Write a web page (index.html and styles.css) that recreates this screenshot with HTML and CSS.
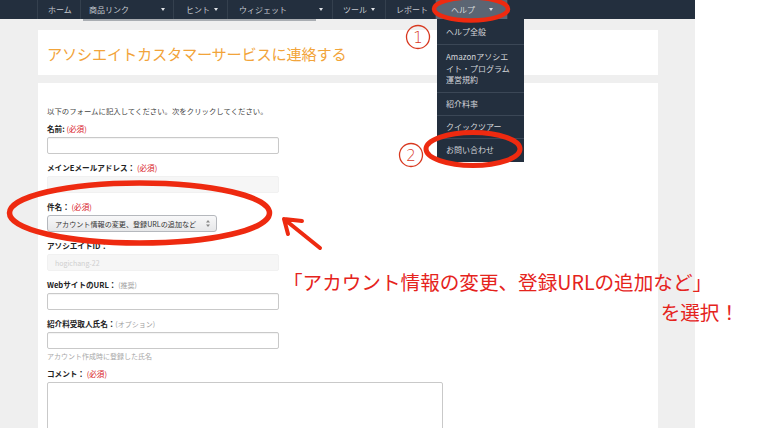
FILE: index.html
```html
<!DOCTYPE html>
<html lang="ja">
<head>
<meta charset="utf-8">
<title>アソシエイトカスタマーサービスに連絡する</title>
<link rel="stylesheet" href="styles.css">
</head>
<body>
<div class="screen">
  <div class="page">
    <nav class="topnav">
      <div class="nav-lead"></div>
      <div class="nav-item i-home"><span>ホーム</span></div>
      <div class="nav-item i-links"><span>商品リンク</span><i class="caret"></i></div>
      <div class="nav-item i-hint"><span>ヒント</span><i class="caret"></i></div>
      <div class="nav-item i-widget"><span>ウィジェット</span><i class="caret"></i></div>
      <div class="nav-item i-tools"><span>ツール</span><i class="caret"></i></div>
      <div class="nav-item i-report"><span>レポート</span></div>
      <div class="nav-item i-help"><span>ヘルプ</span><i class="caret"></i></div>
      <div class="nav-rest"></div>
    </nav>
    <main class="main">
      <div class="scrollbar"></div>
      <section class="card head-card">
        <h1>アソシエイトカスタマーサービスに連絡する</h1>
      </section>
      <section class="card form-card">
        <p class="intro">以下のフォームに記入してください。次をクリックしてください。</p>
        <div class="field">
          <label>名前: <em>(必須)</em></label>
          <input class="input" type="text">
        </div>
        <div class="field">
          <label>メインEメールアドレス： <em>(必須)</em></label>
          <input class="input" type="text" disabled>
        </div>
        <div class="field">
          <label>件名： <em>(必須)</em></label>
          <div class="select">
            <span>アカウント情報の変更、登録URLの追加など</span>
            <svg class="updown" width="4" height="7" viewBox="0 0 4 7"><path d="M2 0 L4 2.5 H0 Z M2 7 L4 4.5 H0 Z" fill="#888"/></svg>
          </div>
        </div>
        <div class="field">
          <label>アソシエイトID：</label>
          <input class="input" type="text" value="hogichang-22" disabled>
        </div>
        <div class="field">
          <label>WebサイトのURL： <small>(推奨)</small></label>
          <input class="input" type="text">
        </div>
        <div class="field has-help">
          <label>紹介料受取人氏名：<small>(オプション)</small></label>
          <input class="input" type="text">
          <p class="help">アカウント作成時に登録した氏名</p>
        </div>
        <div class="field">
          <label>コメント： <em>(必須)</em></label>
          <textarea class="textarea"></textarea>
        </div>
      </section>
    </main>
  </div>

  <ul class="dropdown">
    <li class="d-first">ヘルプ全般</li>
    <li class="d-multi">Amazonアソシエ<br>イト・プログラム<br>運営規約</li>
    <li>紹介料率</li>
    <li>クイックツアー</li>
    <li class="d-last">お問い合わせ</li>
  </ul>

  <svg class="marks" width="760" height="428" viewBox="0 0 760 428">
    <g fill="none" stroke="#ee2a10" stroke-linecap="round" stroke-linejoin="round">
      <ellipse cx="471" cy="9" rx="37" ry="11.5" stroke-width="4.5"/>
      <ellipse cx="473" cy="149" rx="47" ry="16.5" stroke-width="5"/>
      <ellipse cx="139.5" cy="213" rx="130" ry="30" stroke-width="5.5"/>
      <path d="M320 248 L284 219 M284 219 L302 221 M284 219 L288 234" stroke-width="4"/>
    </g>
    <g fill="none" stroke="#d8381f" stroke-width="1.3">
      <circle cx="418" cy="37" r="11.5"/>
      <circle cx="411" cy="155" r="11.5"/>
    </g>
    <text class="num" x="418" y="43" text-anchor="middle">1</text>
    <text class="num" x="411" y="161" text-anchor="middle">2</text>
  </svg>

  <p class="note">
    <span class="note-l1">「アカウント情報の変更、登録URLの追加など」</span>
    <span class="note-l2">を選択！</span>
  </p>
</div>
</body>
</html>
```

FILE: styles.css
```css
* { box-sizing: border-box; }
html, body { margin: 0; padding: 0; }
body {
  font-family: "Noto Sans CJK JP", "Noto Sans", sans-serif;
  background: #fff;
}
.screen {
  position: relative;
  width: 760px;
  height: 428px;
  overflow: hidden;
  display: flex;
  background: #fff;
}
.page {
  width: 695px;
  background: #efefef;
  display: flex;
  flex-direction: column;
}

/* top navigation */
.topnav {
  flex: none;
  height: 19px;
  background: #232f3e;
  display: flex;
}
.nav-lead { width: 37px; }
.nav-rest { flex: 1; border-left: 1px solid #34404e; }
.nav-item {
  display: flex;
  align-items: center;
  justify-content: space-between;
  border-left: 1px solid #34404e;
  color: #c5c9cf;
  font-size: 8px;
  line-height: 19px;
  padding: 0 9px 0 10px;
  white-space: nowrap;
}
.caret {
  width: 0;
  height: 0;
  border-left: 2.5px solid transparent;
  border-right: 2.5px solid transparent;
  border-top: 3px solid #dfe2e6;
}
.i-home { width: 43px; }
.i-links { width: 93px; padding-left: 8px; padding-right: 8px; }
.i-hint { width: 54px; padding-left: 12px; }
.i-widget { width: 105px; padding-left: 11px; }
.i-tools { width: 53px; padding-right: 10px; }
.i-report { width: 50px; }
.i-help {
  width: 72px;
  padding-left: 15px;
  padding-right: 14px;
  background: #5b6573;
  color: #d6d9dd;
}

/* main */
.main {
  flex: 1;
  display: flex;
  flex-direction: column;
  padding: 0 37px 0 38px;
}
.scrollbar {
  margin-left: 45px;
  width: 233px;
  height: 2px;
  background: #a9adb2;
}
.card { background: #fff; }
.head-card {
  margin-top: 9px;
  height: 45px;
  display: flex;
  align-items: center;
  padding-left: 9px;
}
.head-card h1 {
  margin: 0;
  font-size: 15.2px;
  font-weight: 400;
  color: #f2a43a;
  letter-spacing: -0.2px;
}
.form-card {
  margin-top: 8px;
  flex: 1;
  padding: 23px 9px 0;
}
.intro {
  margin: 0 0 8px;
  font-size: 7.4px;
  line-height: 10px;
  color: #444;
}
.field { margin-bottom: 9px; }
.field.has-help { margin-bottom: 8px; }
.field label {
  display: block;
  font-size: 7.6px;
  font-weight: 700;
  line-height: 10px;
  color: #222;
  margin-bottom: 3px;
}
.field label em {
  font-style: normal;
  font-weight: 400;
  color: #d8141c;
}
.field label small {
  font-size: 7px;
  font-weight: 400;
  color: #a0a0a0;
}
.input {
  display: block;
  width: 232px;
  height: 17px;
  margin: 0;
  padding: 0 7px;
  border: 1px solid #c9c9c9;
  border-radius: 2px;
  background: #fff;
  font-family: inherit;
  font-size: 7px;
  color: #333;
  box-shadow: inset 0 1px 1px rgba(0,0,0,0.05);
}
.input:disabled {
  background: #f6f6f6;
  border-color: #f1f1f1;
  box-shadow: none;
  color: #cfcfcf;
}
.select {
  width: 170px;
  height: 17px;
  display: flex;
  align-items: center;
  justify-content: space-between;
  padding: 0 6px 0 7px;
  border: 1px solid #b5b8bd;
  border-radius: 3px;
  background: linear-gradient(#f8f8f9, #e6e7e9);
  font-size: 7.1px;
  color: #333;
  white-space: nowrap;
}
.updown { flex: none; }
.help {
  margin: 2px 0 0;
  font-size: 7px;
  line-height: 10px;
  color: #a8a8a8;
}
.textarea {
  display: block;
  width: 396px;
  height: 70px;
  margin: 0;
  border: 1px solid #c9c9c9;
  border-radius: 2px;
  background: #fff;
  resize: none;
}

/* dropdown menu */
.dropdown {
  position: absolute;
  left: 437px;
  top: 19px;
  width: 87px;
  margin: 0;
  padding: 0;
  list-style: none;
  background: #232f3e;
}
.dropdown li {
  display: flex;
  align-items: center;
  min-height: 23px;
  padding: 0 5px 0 9px;
  font-size: 8px;
  line-height: 11.5px;
  color: #d3d6da;
  border-top: 1px solid #3b4756;
  white-space: nowrap;
}
.dropdown li.d-first { border-top: 0; min-height: 25px; }
.dropdown li.d-multi { padding-top: 6px; padding-bottom: 6px; }
.dropdown li.d-last { min-height: 24px; }

/* annotations */
.marks {
  position: absolute;
  left: 0;
  top: 0;
  pointer-events: none;
}
.num {
  font-family: "DejaVu Sans", sans-serif;
  font-weight: 200;
  font-size: 15px;
  fill: #d8381f;
}
.note {
  position: absolute;
  left: 283px;
  top: 267px;
  width: 456px;
  margin: 0;
  font-size: 19.6px;
  line-height: 30px;
  color: #e5231c;
  white-space: nowrap;
}
.note-l1 { display: block; }
.note-l2 { display: block; text-align: right; }
```
